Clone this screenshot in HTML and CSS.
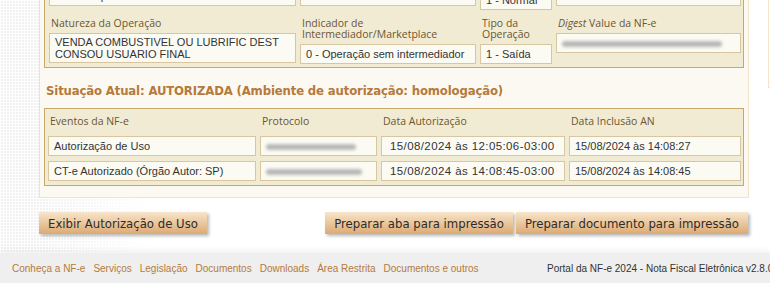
FILE: index.html
```html
<!DOCTYPE html>
<html lang="pt-BR">

<head>
    <meta charset="UTF-8">
    <meta name="viewport" content="width=device-width, initial-scale=1.0">
    <title>Consulta NF-e</title>
    <link rel="stylesheet" href="styles.css">
</head>

<body>
    <div class="page">
        <div class="wrap">
            <div class="main">
                <div class="panel">
                    <!-- dados gerais da NF-e -->
                    <div class="box">
                        <div class="row row-prev">
                            <div class="cell"><span class="lbl">Processo</span><div class="fld">0 - com aplicativo do Contribuinte</div></div>
                            <div class="cell"><span class="lbl">Versão do Processo</span><div class="fld">1.0</div></div>
                            <div class="cell"><span class="lbl">Emissão</span><div class="fld fld-low">1 - Normal</div></div>
                            <div class="cell"><span class="lbl">Finalidade</span><div class="fld">1 - Normal</div></div>
                        </div>
                        <div class="row">
                            <div class="cell">
                                <span class="lbl">Natureza da Operação</span>
                                <div class="fld fld-two">VENDA COMBUSTIVEL OU LUBRIFIC DEST CONSOU USUARIO FINAL</div>
                            </div>
                            <div class="cell">
                                <span class="lbl">Indicador de Intermediador/Marketplace</span>
                                <div class="fld">0 - Operação sem intermediador</div>
                            </div>
                            <div class="cell">
                                <span class="lbl">Tipo da Operação</span>
                                <div class="fld">1 - Saída</div>
                            </div>
                            <div class="cell">
                                <span class="lbl"><i>Digest</i> Value da NF-e</span>
                                <div class="fld"><span class="blur blur-digest"></span></div>
                            </div>
                        </div>
                    </div>

                    <h3 class="status">Situação Atual: AUTORIZADA (Ambiente de autorização: homologação)</h3>

                    <!-- eventos -->
                    <div class="box events">
                        <span class="lbl">Eventos da NF-e</span>
                        <span class="lbl">Protocolo</span>
                        <span class="lbl">Data Autorização</span>
                        <span class="lbl">Data Inclusão AN</span>

                        <div class="fld">Autorização de Uso</div>
                        <div class="fld"><span class="blur blur-p1"></span></div>
                        <div class="fld fld-date">15/08/2024 às 12:05:06-03:00</div>
                        <div class="fld">15/08/2024 às 14:08:27</div>

                        <div class="fld">CT-e Autorizado (Órgão Autor: SP)</div>
                        <div class="fld"><span class="blur blur-p2"></span></div>
                        <div class="fld fld-date">15/08/2024 às 14:08:45-03:00</div>
                        <div class="fld">15/08/2024 às 14:08:45</div>
                    </div>
                </div>

                <div class="actions">
                    <button class="btn">Exibir Autorização de Uso</button>
                    <div class="actions-right">
                        <button class="btn">Preparar aba para impressão</button>
                        <button class="btn">Preparar documento para impressão</button>
                    </div>
                </div>
            </div>
            <div class="side"></div>
        </div>

        <div class="footer">
            <div class="footer-links">
                <a href="#">Conheça a NF-e</a>
                <a href="#">Serviços</a>
                <a href="#">Legislação</a>
                <a href="#">Documentos</a>
                <a href="#">Downloads</a>
                <a href="#">Área Restrita</a>
                <a href="#">Documentos e outros</a>
            </div>
            <span class="copy">Portal da NF-e 2024 - Nota Fiscal Eletrônica v2.8.0</span>
        </div>
    </div>
</body>

</html>
```

FILE: styles.css
```css
* {
    margin: 0;
    padding: 0;
    box-sizing: border-box;
}

body {
    background: #fff;
    overflow: hidden;
    font-family: "Open Sans", "DejaVu Sans", sans-serif;
}

/* a pagina esta rolada para baixo */
.page {
    margin-top: -39px;
}

.wrap {
    display: flex;
    align-items: flex-start;
    background-color: #f1f1f1;
    background-image:
        linear-gradient(to right, rgba(255, 255, 255, 0) 40px, #fff 150px),
        linear-gradient(90deg, #fff 1px, transparent 1px),
        linear-gradient(#fff 1px, transparent 1px);
    background-size: auto, 3px 3px, 3px 3px;
    padding-bottom: 19px;
}

.main {
    padding-left: 39px;
    width: 749px;
    flex: none;
}

.panel {
    border: 1px solid #f2e3c6;
    background: #fbf9f1;
    padding: 4px 4px 11px;
}

.box {
    border: 1px solid #c9a86c;
    background: #f2ebd4;
    padding: 4px 2px 3px 4px;
}

.row {
    display: grid;
    grid-template-columns: 251px 180px 76px 185px;
    align-items: start;
    margin-top: 8px;
}

.row-prev {
    margin-top: 0;
}

.row-prev .lbl {
    white-space: nowrap;
    overflow: hidden;
}

.lbl {
    display: block;
    font-size: 10.5px;
    line-height: 11px;
    color: #6b5632;
    padding-left: 2px;
    margin-bottom: 4px;
}

.fld {
    border: 1px solid #d8c6a0;
    background: #fbfbf4;
    font-family: "Liberation Sans", Arial, sans-serif;
    font-size: 11px;
    line-height: 14px;
    height: 20px;
    padding: 2px 5px;
    color: #333;
    margin-right: 4px;
    white-space: nowrap;
    overflow: hidden;
}

.cell:last-child .fld {
    margin-right: 0;
}

.fld-two {
    white-space: normal;
    line-height: 12px;
    height: 30px;
}

.fld-low {
    margin-top: 8px;
}

.blur {
    display: inline-block;
    height: 6px;
    background: #b9b9b9;
    border-radius: 3px;
    filter: blur(1.5px);
    vertical-align: middle;
}

.blur-digest {
    width: 160px;
}

.blur-p1 {
    width: 90px;
}

.blur-p2 {
    width: 96px;
}

.status {
    font-family: "DejaVu Sans Condensed", "DejaVu Sans", sans-serif;
    font-stretch: condensed;
    font-size: 13px;
    letter-spacing: -0.15px;
    line-height: 17px;
    font-weight: bold;
    color: #b67a3c;
    margin: 14px 0 9px 2px;
}

.events {
    display: grid;
    grid-template-columns: 212px 121px 188px 172px;
    row-gap: 5px;
    padding: 7px 2px 4px 3px;
}

.events .lbl {
    margin-bottom: 4px;
}

.events .fld:nth-child(4n) {
    margin-right: 0;
}

.fld-date {
    font-size: 11.5px;
    letter-spacing: 0.4px;
    padding-left: 8px;
}

.actions {
    display: flex;
    justify-content: space-between;
    margin-top: 14px;
    padding-right: 1px;
}

.actions-right {
    display: flex;
    gap: 3px;
}

.btn {
    border: none;
    height: 22px;
    padding: 0 9px;
    font-family: "DejaVu Sans Condensed", "DejaVu Sans", sans-serif;
    font-stretch: condensed;
    font-size: 13px;
    color: #2f2b2b;
    background: linear-gradient(#f7e5cb, #dcaa72);
    box-shadow: 2px 2px 3px rgba(0, 0, 0, 0.28);
}

.side {
    margin-left: 19px;
    width: 200px;
    height: 127px;
    border-left: 1px solid #f3e5cb;
    border-bottom: 1px solid #f3e5cb;
}

.footer {
    display: flex;
    background: #efefef;
    box-shadow: 0 -3px 6px rgba(0, 0, 0, 0.05);
    padding: 10px 0 20px 12px;
    font-family: "Liberation Sans", Arial, sans-serif;
    font-size: 10px;
    line-height: 12px;
    white-space: nowrap;
}

.footer-links {
    display: flex;
    gap: 8px;
    width: 535px;
    flex: none;
}

.footer-links a {
    color: #b47a40;
    text-decoration: none;
}

.copy {
    color: #333;
}
```
